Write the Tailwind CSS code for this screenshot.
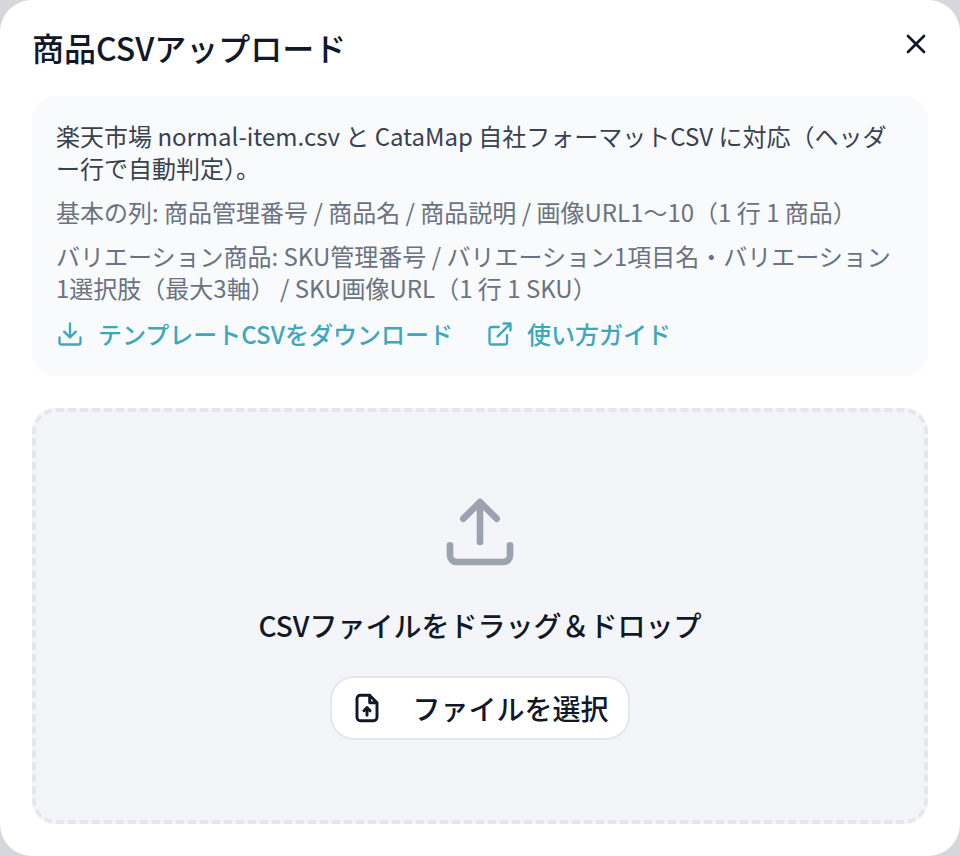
<!DOCTYPE html>
<html lang="ja">
<head>
    <meta charset="UTF-8">
    <title>商品CSVアップロード</title>
    <script src="https://cdn.jsdelivr.net/npm/@tailwindcss/browser@4"></script>
</head>
<body class="bg-[#d6d7dc] overflow-hidden font-['Noto_Sans_CJK_JP','Noto_Sans',sans-serif]">
    <div class="w-[960px] h-[856px] bg-white rounded-[32px] p-8 flex flex-col">
        <!-- Header -->
        <div class="flex items-start justify-between h-[64px]">
            <h1 class="text-[32px] leading-[36px] -mt-[3px] font-medium text-[#111827]">商品CSVアップロード</h1>
            <svg class="w-8 h-8 -mr-1 -mt-[4px] text-[#111827]" viewBox="0 0 24 24" fill="none" stroke="currentColor" stroke-width="2" stroke-linecap="round">
                <path d="M6 6l12 12M18 6L6 18"/>
            </svg>
        </div>

        <!-- Info -->
        <div class="bg-[#f9fafb] rounded-3xl h-[280px] px-6 pt-6 text-[24px] leading-8 text-[#374151]">
            <p>楽天市場 normal-item.csv と CataMap 自社フォーマットCSV に対応（ヘッダー行で自動判定）。</p>
            <p class="mt-3 text-[#6b7280]">基本の列: 商品管理番号 / 商品名 / 商品説明 / 画像URL1〜10（1 行 1 商品）</p>
            <p class="mt-3 text-[#6b7280]">バリエーション商品: SKU管理番号 / バリエーション1項目名・バリエーション1選択肢（最大3軸） / SKU画像URL（1 行 1 SKU）</p>
            <div class="mt-[14px] flex items-center gap-[33px] text-[#3fa7bb] font-medium">
                <a class="flex items-center gap-[14px]">
                    <svg class="w-7 h-7" viewBox="0 0 24 24" fill="none" stroke="currentColor" stroke-width="2" stroke-linecap="round" stroke-linejoin="round">
                        <path d="M21 15v4a2 2 0 0 1-2 2H5a2 2 0 0 1-2-2v-4M7 10l5 5 5-5M12 15V3"/>
                    </svg>
                    テンプレートCSVをダウンロード
                </a>
                <a class="flex items-center gap-[13px]">
                    <svg class="w-7 h-7" viewBox="0 0 24 24" fill="none" stroke="currentColor" stroke-width="2" stroke-linecap="round" stroke-linejoin="round">
                        <path d="M18 13v6a2 2 0 0 1-2 2H5a2 2 0 0 1-2-2V8a2 2 0 0 1 2-2h6M15 3h6v6M10 14L21 3"/>
                    </svg>
                    使い方ガイド
                </a>
            </div>
        </div>

        <!-- Drop zone -->
        <div class="mt-8 h-[416px] bg-[#f4f5f9] border-4 border-dashed border-[#e5e7eb] rounded-3xl flex flex-col items-center pt-20">
            <svg class="w-20 h-20 text-[#9ca3af]" viewBox="0 0 24 24" fill="none" stroke="currentColor" stroke-width="2" stroke-linecap="round" stroke-linejoin="round">
                <path d="M3 16v3a2 2 0 0 0 2 2h14a2 2 0 0 0 2-2v-3M7 8l5-5 5 5M12 3v12"/>
            </svg>
            <p class="mt-[33px] text-[28px] leading-10 font-medium text-[#111827]">CSVファイルをドラッグ＆ドロップ</p>
            <button class="mt-[31px] h-16 w-[300px] bg-white border-2 border-[#e5e7eb] rounded-3xl flex items-center justify-center gap-[29px] text-[28px] font-medium text-[#111827]">
                <svg class="w-8 h-8" viewBox="0 0 24 24" fill="none" stroke="currentColor" stroke-width="2.200" stroke-linecap="round" stroke-linejoin="round">
                    <path d="M14 2.500H7A2.500 2.500 0 0 0 4.500 5v14A2.500 2.500 0 0 0 7 21.500h10a2.500 2.500 0 0 0 2.500-2.500V8zM14 2.500V8h5.500M12 17.500v-5.500M9.700 14L12 11.700l2.300 2.300"/>
                </svg>
                ファイルを選択
            </button>
        </div>
    </div>
</body>
</html>
